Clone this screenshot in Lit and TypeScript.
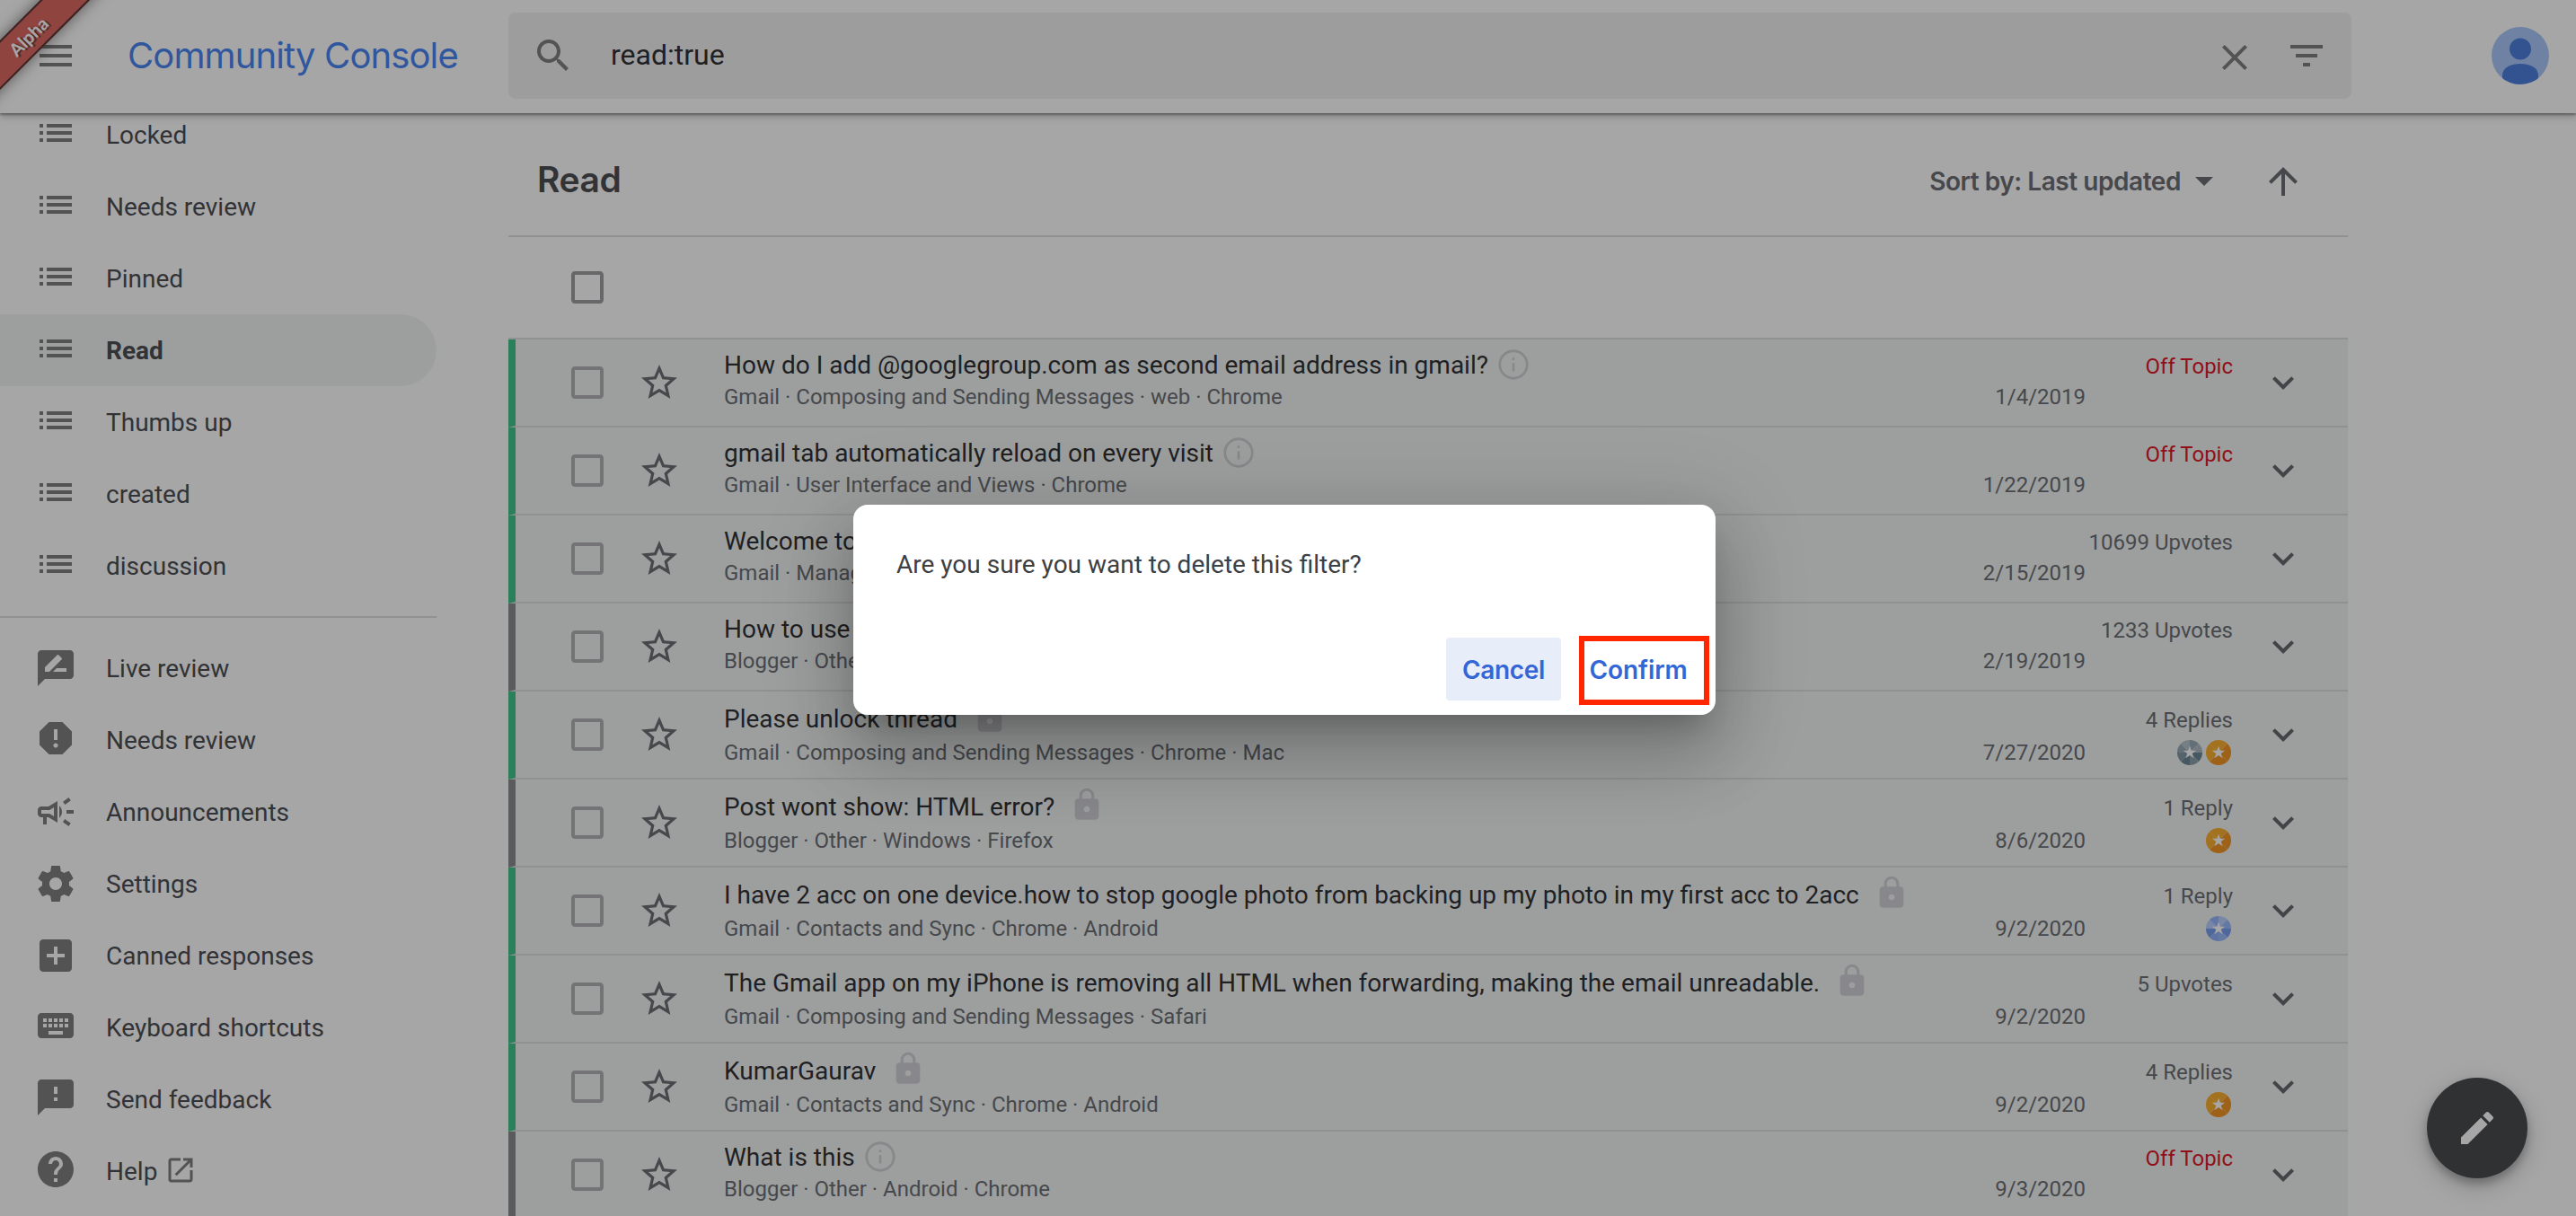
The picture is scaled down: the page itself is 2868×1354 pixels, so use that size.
import { LitElement, html, svg, css, nothing } from "lit";
import { customElement, property } from "lit/decorators.js";
import { classMap } from "lit/directives/class-map.js";

const ICONS: Record<string, string> = {
  menu: "M3 18h18v-2H3v2zm0-5h18v-2H3v2zm0-7v2h18V6H3z",
  search:
    "M15.5 14h-.79l-.28-.27C15.41 12.59 16 11.11 16 9.5 16 5.91 13.09 3 9.5 3S3 5.91 3 9.5 5.91 16 9.5 16c1.61 0 3.09-.59 4.23-1.57l.27.28v.79l5 4.99L20.49 19l-4.99-5zm-6 0C7.01 14 5 11.99 5 9.5S7.01 5 9.5 5 14 7.01 14 9.5 11.99 14 9.5 14z",
  close:
    "M19 6.41L17.59 5 12 10.59 6.41 5 5 6.41 10.59 12 5 17.59 6.41 19 12 13.41 17.59 19 19 17.59 13.41 12z",
  filter: "M10 18h4v-2h-4v2zM3 6v2h18V6H3zm3 7h12v-2H6v2z",
  list: "M3 7h2v2H3zM3 11h2v2H3zM3 15h2v2H3zM7 7h14v2H7zM7 11h14v2H7zM7 15h14v2H7z",
  liveReview:
    "M20 2H4c-1.1 0-1.99.9-1.99 2L2 22l4-4h14c1.1 0 2-.9 2-2V4c0-1.1-.9-2-2-2zM6 14v-2.47l6.88-6.88c.2-.2.51-.2.71 0l1.77 1.77c.2.2.2.51 0 .71L8.47 14H6zm12 0h-7.5l2-2H18v2z",
  report:
    "M15.73 3H8.27L3 8.27v7.46L8.27 21h7.46L21 15.73V8.27L15.73 3zM12 17.3c-.72 0-1.3-.58-1.3-1.3 0-.72.58-1.3 1.3-1.3.72 0 1.3.58 1.3 1.3 0 .72-.58 1.3-1.3 1.3zm1-4.3h-2V7h2v6z",
  campaign:
    "M18 11v2h4v-2h-4zm-2 6.61c.96.71 2.21 1.65 3.2 2.39.4-.53.8-1.07 1.2-1.6-.99-.74-2.24-1.68-3.2-2.4-.4.54-.8 1.08-1.2 1.61zM20.4 5.6c-.4-.53-.8-1.07-1.2-1.6-.99.74-2.24 1.68-3.2 2.4.4.53.8 1.07 1.2 1.6.96-.72 2.21-1.65 3.2-2.4zM4 9c-1.1 0-2 .9-2 2v2c0 1.1.9 2 2 2h1v4h2v-4h1l5 3V6L8 9H4zm5.03 1.71L11 9.53v4.94l-1.97-1.18-.48-.29H4v-2h4.55l.48-.29zM15.5 12c0-1.33-.58-2.53-1.5-3.35v6.69c.92-.81 1.5-2.01 1.5-3.34z",
  settings:
    "M19.43 12.98c.04-.32.07-.64.07-.98s-.03-.66-.07-.98l2.11-1.65c.19-.15.24-.42.12-.64l-2-3.46c-.12-.22-.39-.3-.61-.22l-2.49 1c-.52-.4-1.08-.73-1.69-.98l-.38-2.65C14.46 2.18 14.25 2 14 2h-4c-.25 0-.46.18-.49.42l-.38 2.65c-.61.25-1.17.59-1.69.98l-2.49-1c-.23-.09-.49 0-.61.22l-2 3.46c-.13.22-.07.49.12.64l2.11 1.65c-.04.32-.07.65-.07.98s.03.66.07.98l-2.11 1.65c-.19.15-.24.42-.12.64l2 3.46c.12.22.39.3.61.22l2.49-1c.52.4 1.08.73 1.69.98l.38 2.65c.03.24.24.42.49.42h4c.25 0 .46-.18.49-.42l.38-2.65c.61-.25 1.17-.59 1.69-.98l2.49 1c.23.09.49 0 .61-.22l2-3.46c.12-.22.07-.49-.12-.64l-2.11-1.65zM12 15.5c-1.93 0-3.5-1.57-3.5-3.5s1.57-3.5 3.5-3.5 3.5 1.57 3.5 3.5-1.57 3.5-3.5 3.5z",
  addBox:
    "M19 3H5c-1.11 0-2 .9-2 2v14c0 1.1.89 2 2 2h14c1.1 0 2-.9 2-2V5c0-1.1-.9-2-2-2zm-2 10h-4v4h-2v-4H7v-2h4V7h2v4h4v2z",
  keyboard:
    "M20 5H4c-1.1 0-1.99.9-1.99 2L2 17c0 1.1.9 2 2 2h16c1.1 0 2-.9 2-2V7c0-1.1-.9-2-2-2zm-9 3h2v2h-2V8zm0 3h2v2h-2v-2zM8 8h2v2H8V8zm0 3h2v2H8v-2zm-1 2H5v-2h2v2zm0-3H5V8h2v2zm9 7H8v-2h8v2zm0-4h-2v-2h2v2zm0-3h-2V8h2v2zm3 3h-2v-2h2v2zm0-3h-2V8h2v2z",
  feedback:
    "M20 2H4c-1.1 0-1.99.9-1.99 2L2 22l4-4h14c1.1 0 2-.9 2-2V4c0-1.1-.9-2-2-2zm-7 12h-2v-2h2v2zm0-4h-2V6h2v4z",
  help: "M12 2C6.48 2 2 6.48 2 12s4.48 10 10 10 10-4.48 10-10S17.52 2 12 2zm1 17h-2v-2h2v2zm2.07-7.75l-.9.92C13.45 12.9 13 13.5 13 15h-2v-.5c0-1.1.45-2.1 1.17-2.83l1.24-1.26c.37-.36.59-.86.59-1.41 0-1.1-.9-2-2-2s-2 .9-2 2H8c0-2.21 1.79-4 4-4s4 1.79 4 4c0 .88-.36 1.68-.93 2.25z",
  openInNew:
    "M19 19H5V5h7V3H5c-1.11 0-2 .9-2 2v14c0 1.1.89 2 2 2h14c1.1 0 2-.9 2-2v-7h-2v7zM14 3v2h3.59l-9.83 9.83 1.41 1.41L19 6.41V10h2V3h-7z",
  dropDown: "M7 10l5 5 5-5z",
  arrowUp: "M4 12l1.41 1.41L11 7.83V20h2V7.83l5.58 5.59L20 12l-8-8-8 8z",
  checkbox:
    "M19 5v14H5V5h14m0-2H5c-1.1 0-2 .9-2 2v14c0 1.1.9 2 2 2h14c1.1 0 2-.9 2-2V5c0-1.1-.9-2-2-2z",
  star: "M22 9.24l-7.19-.62L12 2 9.19 8.63 2 9.24l5.46 4.73L5.82 21 12 17.27 18.18 21l-1.63-7.03L22 9.24zM12 15.4l-3.76 2.27 1-4.28-3.32-2.88 4.38-.38L12 6.1l1.71 4.04 4.38.38-3.32 2.88 1 4.28L12 15.4z",
  info: "M11.2 16.5h1.6V11h-1.6v5.5zM12 2C6.48 2 2 6.48 2 12s4.48 10 10 10 10-4.48 10-10S17.52 2 12 2zm0 18.3c-4.58 0-8.3-3.72-8.3-8.3S7.42 3.7 12 3.7s8.3 3.72 8.3 8.3-3.72 8.3-8.3 8.3zM11.2 9h1.6V7.4h-1.6V9z",
  lock: "M18 8h-1V6c0-2.76-2.24-5-5-5S7 3.24 7 6v2H6c-1.1 0-2 .9-2 2v10c0 1.1.9 2 2 2h12c1.1 0 2-.9 2-2V10c0-1.1-.9-2-2-2zm-6 9c-1.1 0-2-.9-2-2s.9-2 2-2 2 .9 2 2-.9 2-2 2zm3.1-9H8.9V6c0-1.71 1.39-3.1 3.1-3.1 1.71 0 3.1 1.39 3.1 3.1v2z",
  expand: "M16.59 8.59L12 13.17 7.41 8.59 6 10l6 6 6-6z",
  edit: "M3 17.25V21h3.75L17.81 9.94l-3.75-3.75L3 17.25zM20.71 7.04c.39-.39.39-1.02 0-1.41l-2.34-2.34c-.39-.39-1.02-.39-1.41 0l-1.83 1.83 3.75 3.75 1.83-1.83z",
};

const icon = (name: string, cls = "") =>
  html`<svg class="icon ${cls}" viewBox="0 0 24 24" aria-hidden="true"><path d=${ICONS[name]}></path></svg>`;

const iconStyles = css`
  .icon {
    display: block;
    flex: none;
    width: 48px;
    height: 48px;
    fill: currentColor;
  }
`;

type Tone = "gold" | "silver" | "blue";

interface Thread {
  title: string;
  meta: string;
  date: string;
  stat: string;
  offTopic?: boolean;
  mark?: "info" | "lock";
  badges?: Tone[];
  accent: "green" | "gray";
  tall?: boolean;
}

const THREADS: Thread[] = [
  { title: "How do I add @googlegroup.com as second email address in gmail?", meta: "Gmail · Composing and Sending Messages · web · Chrome", date: "1/4/2019", stat: "Off Topic", offTopic: true, mark: "info", accent: "green" },
  { title: "gmail tab automatically reload on every visit", meta: "Gmail · User Interface and Views · Chrome", date: "1/22/2019", stat: "Off Topic", offTopic: true, mark: "info", accent: "green" },
  { title: "Welcome to", meta: "Gmail · Manage", date: "2/15/2019", stat: "10699 Upvotes", accent: "green" },
  { title: "How to use", meta: "Blogger · Other", date: "2/19/2019", stat: "1233 Upvotes", accent: "gray" },
  { title: "Please unlock thread", meta: "Gmail · Composing and Sending Messages · Chrome · Mac", date: "7/27/2020", stat: "4 Replies", mark: "lock", badges: ["silver", "gold"], accent: "green", tall: true },
  { title: "Post wont show: HTML error?", meta: "Blogger · Other · Windows · Firefox", date: "8/6/2020", stat: "1 Reply", mark: "lock", badges: ["gold"], accent: "gray", tall: true },
  { title: "I have 2 acc on one device.how to stop google photo from backing up my photo in my first acc to 2acc", meta: "Gmail · Contacts and Sync · Chrome · Android", date: "9/2/2020", stat: "1 Reply", mark: "lock", badges: ["blue"], accent: "green", tall: true },
  { title: "The Gmail app on my iPhone is removing all HTML when forwarding, making the email unreadable.", meta: "Gmail · Composing and Sending Messages · Safari", date: "9/2/2020", stat: "5 Upvotes", mark: "lock", accent: "green", tall: true },
  { title: "KumarGaurav", meta: "Gmail · Contacts and Sync · Chrome · Android", date: "9/2/2020", stat: "4 Replies", mark: "lock", badges: ["gold"], accent: "green", tall: true },
  { title: "What is this", meta: "Blogger · Other · Android · Chrome", date: "9/3/2020", stat: "Off Topic", offTopic: true, mark: "info", accent: "gray" },
];

const FILTERS = ["Locked", "Needs review", "Pinned", "Read", "Thumbs up", "created", "discussion"];

const LINKS: { label: string; icon: string; low?: boolean; external?: boolean }[] = [
  { label: "Live review", icon: "liveReview", low: true },
  { label: "Needs review", icon: "report" },
  { label: "Announcements", icon: "campaign", low: true },
  { label: "Settings", icon: "settings", low: true },
  { label: "Canned responses", icon: "addBox", low: true },
  { label: "Keyboard shortcuts", icon: "keyboard" },
  { label: "Send feedback", icon: "feedback" },
  { label: "Help", icon: "help", external: true },
];

/* Eight wedge colours per badge, clockwise from twelve o'clock. */
const WEDGES: Record<Tone, string[]> = {
  gold: ["#fba81c", "#f18c12", "#f18c12", "#f18c12", "#f18c12", "#fba81c", "#fba81c", "#fba81c"],
  silver: ["#90a4ae", "#a3b4bd", "#607d8b", "#8398a3", "#607d8b", "#78909c", "#90a4ae", "#b0bec5"],
  blue: ["#b4ccff", "#92b2fa", "#6f97ee", "#92b2fa", "#87aaf8", "#7096ec", "#b4ccff", "#8db0fa"],
};

@customElement("medal-badge")
class MedalBadge extends LitElement {
  static styles = css`
    :host { display: block; width: 28px; height: 28px; }
    svg { display: block; width: 28px; height: 28px; }
  `;
  @property() tone: Tone = "gold";

  render() {
    const at = (i: number) => {
      const a = (i * Math.PI) / 4 - Math.PI / 2;
      return `${(14 + 14 * Math.cos(a)).toFixed(2)} ${(14 + 14 * Math.sin(a)).toFixed(2)}`;
    };
    return html`<svg viewBox="0 0 28 28" aria-hidden="true">
      ${WEDGES[this.tone].map((c, i) => svg`<path fill=${c} d="M14 14L${at(i)}A14 14 0 0 1 ${at(i + 1)}z"></path>`)}
      <path fill="#fff" d="M14 6.6l1.75 5.15 5.45.05-4.4 3.2 1.65 5.2L14 17.05 9.55 20.2l1.65-5.2-4.4-3.2 5.45-.05z"></path>
    </svg>`;
  }
}

@customElement("thread-row")
class ThreadRow extends LitElement {
  static styles = [
    iconStyles,
    css`
      :host { display: block; }
      .row {
        box-sizing: border-box;
        display: flex;
        height: 98px;
        border-bottom: 2px solid #dadcdc;
        border-left: 8px solid #30c07e;
        padding: 0 48px 0 56px;
        background: #f0f4f2;
      }
      .gray { border-left-color: #808284; }
      .check, .fav, .more { align-self: center; }
      .check { color: #acacae; margin-right: 32px; }
      .fav { color: #5f6368; margin-right: 48px; }
      .more { color: #5a5c60; margin-left: 32px; }
      .body { flex: 1; min-width: 0; padding-top: 8px; }
      .date, .stats { flex: none; padding-top: 8px; color: #5f6368; font-size: 24px; text-align: right; }
      .stats { width: 164px; }
      .title, .top { display: flex; align-items: center; height: 40px; }
      .title { font-size: 28px; color: #202124; white-space: pre; }
      .meta, .bottom { display: flex; align-items: center; height: 32px; font-size: 24px; color: #5f6368; white-space: pre; }
      .top, .bottom { justify-content: flex-end; }
      .top { box-sizing: border-box; padding-top: 3px; white-space: nowrap; }
      .off { color: #dd0612; }
      .mark { width: 40px; height: 40px; color: #cdcdd0; margin-left: 8px; }
      .lock { margin-left: 16px; margin-top: -4px; color: #cdced2; }
      .tall .body, .tall .date, .tall .stats { padding-top: 10px; }
      .tall .meta, .tall .bottom { margin-top: 2px; }
      .badges { gap: 4px; padding-right: 2px; }
    `,
  ];
  @property({ attribute: false }) thread!: Thread;

  render() {
    const t = this.thread;
    return html`<div class=${classMap({ row: true, gray: t.accent === "gray", tall: !!t.tall })}>
      ${icon("checkbox", "check")} ${icon("star", "fav")}
      <div class="body">
        <div class="title"><span>${t.title}</span>${t.mark ? icon(t.mark, `mark ${t.mark}`) : nothing}</div>
        <div class="meta">${t.meta}</div>
      </div>
      <div class="date"><div class="top"></div><div class="bottom">${t.date}</div></div>
      <div class="stats">
        <div class=${classMap({ top: true, off: !!t.offTopic })}>${t.stat}</div>
        <div class="bottom badges">${(t.badges ?? []).map((b) => html`<medal-badge .tone=${b}></medal-badge>`)}</div>
      </div>
      ${icon("expand", "more")}
    </div>`;
  }
}

@customElement("side-nav")
class SideNav extends LitElement {
  static styles = [
    iconStyles,
    css`
      :host { display: block; width: 486px; color: #3c4043; font-size: 28px; }
      .item { box-sizing: border-box; display: flex; align-items: center; height: 80px; padding-left: 38px; }
      .item .lead { color: #757575; margin: 0 32px 4px 0; }
      .item .low { margin-bottom: 0; }
      .active { background: #f0f4f2; border-radius: 0 40px 40px 0; font-weight: 700; }
      .rule { height: 2px; background: #dadcdc; margin: 16px 0; }
      .item .ext { width: 36px; height: 36px; margin: 0 0 2px 8px; color: #757575; }
    `,
  ];

  render() {
    return html`
      ${FILTERS.map((f) => html`<div class=${classMap({ item: true, active: f === "Read" })}>${icon("list", "lead")}<span>${f}</span></div>`)}
      <div class="rule"></div>
      ${LINKS.map((l) => html`<div class="item">
        ${icon(l.icon, l.low ? "lead low" : "lead")}<span>${l.label}</span>${l.external ? icon("openInNew", "ext") : nothing}
      </div>`)}
    `;
  }
}

@customElement("confirm-dialog")
class ConfirmDialog extends LitElement {
  static styles = css`
    :host {
      box-sizing: border-box;
      display: flex;
      flex-direction: column;
      justify-content: space-between;
      width: 960px;
      height: 234px;
      padding: 49px 16px 16px 48px;
      border-radius: 16px;
      background: #fff;
      box-shadow: 0 22px 30px -14px rgba(0, 0, 0, 0.2), 0 48px 76px 6px rgba(0, 0, 0, 0.14), 0 18px 92px 16px rgba(0, 0, 0, 0.15);
    }
    .message { font-size: 28px; line-height: 36px; color: #3c4043; }
    .actions { display: flex; justify-content: flex-end; gap: 16px; }
    .button {
      position: relative;
      box-sizing: border-box;
      display: flex;
      align-items: center;
      justify-content: center;
      height: 70px;
      width: 128px;
      padding-top: 2px;
      border-radius: 4px;
      font: 600 28px Inter, sans-serif;
      letter-spacing: -0.3px;
      color: #3367d6;
    }
    .focused { background: #e7edf9; }
    .confirm { width: 140px; letter-spacing: -0.1px; }
    .highlight {
      position: absolute;
      box-sizing: border-box;
      left: 4px;
      top: -2px;
      width: 145px;
      height: 77px;
      border: 6px solid #ff2600;
    }
  `;

  render() {
    return html`
      <div class="message">Are you sure you want to delete this filter?</div>
      <div class="actions">
        <div class="button focused">Cancel</div>
        <div class="button confirm">Confirm<span class="highlight"></span></div>
      </div>
    `;
  }
}

@customElement("app-root")
class AppRoot extends LitElement {
  static styles = [
    iconStyles,
    css`
      :host {
        display: block;
        position: relative;
        width: 2868px;
        height: 1354px;
        overflow: hidden;
        background: #fff;
        font-family: Roboto, "Liberation Sans", sans-serif;
        color: #202124;
      }
      .header {
        position: relative;
        z-index: 1;
        box-sizing: border-box;
        display: flex;
        align-items: center;
        height: 126px;
        padding: 14px 30px 16px 38px;
        background: #fff;
        box-shadow: 0 2px 2px rgba(0, 0, 0, 0.32), 0 4px 8px rgba(0, 0, 0, 0.24);
      }
      .header .icon { color: #757575; }
      .brand { width: 424px; margin-left: 56px; padding-bottom: 1px; font: 400 40px Inter, sans-serif; letter-spacing: -0.88px; color: #3b7cf0; }
      .search {
        box-sizing: border-box;
        display: flex;
        align-items: center;
        width: 2052px;
        height: 96px;
        padding: 0 26px;
        border-radius: 8px;
        background: #f0f0f0;
      }
      .query { flex: 1; margin-left: 40px; padding-bottom: 2px; font-size: 32px; }
      .clear { margin: 4px 32px 0 0; }
      .avatar { width: 64px; height: 64px; margin-left: auto; }
      .layout { display: flex; }
      .nav { margin-top: -16px; margin-right: 80px; }
      .main { width: 2048px; }
      .heading {
        box-sizing: border-box;
        display: flex;
        align-items: center;
        height: 138px;
        padding: 16px 48px 0 32px;
        border-bottom: 2px solid #dadcdc;
      }
      .name { flex: 1; padding-bottom: 5px; font: 600 39px Inter, sans-serif; letter-spacing: -0.4px; color: #3c4043; }
      .sort { font: 600 28px Inter, sans-serif; letter-spacing: -0.45px; color: #5f6368; }
      .heading .icon { color: #5f6368; }
      .caret { margin: 0 40px 2px 2px; }
      .toolbar {
        box-sizing: border-box;
        display: flex;
        align-items: center;
        height: 114px;
        padding-left: 64px;
        border-bottom: 2px solid #dadcdc;
      }
      .toolbar .icon { color: #97979a; }
      .ribbon {
        position: absolute;
        z-index: 2;
        left: -64px;
        top: 17px;
        box-sizing: border-box;
        width: 200px;
        height: 39px;
        padding-right: 12px;
        border: solid #4b2523;
        border-width: 2px 0;
        background: #d95c53;
        box-shadow: 0 0 16px rgba(0, 0, 0, 0.55);
        transform: rotate(-45deg);
        font: 700 20px/35px Lato, sans-serif;
        text-align: center;
        color: #fff;
        text-shadow: 2px 2px 0 rgba(0, 0, 0, 0.45);
      }
      .fab {
        position: absolute;
        right: 54px;
        bottom: 42px;
        display: flex;
        align-items: center;
        justify-content: center;
        width: 112px;
        height: 112px;
        border-radius: 50%;
        background: #3b3d3f;
        color: #fff;
        box-shadow: 0 6px 10px rgba(0, 0, 0, 0.25), 0 8px 28px rgba(0, 0, 0, 0.22);
      }
      .scrim {
        position: absolute;
        inset: 0;
        z-index: 3;
        display: flex;
        justify-content: center;
        align-items: flex-start;
        box-sizing: border-box;
        padding: 562px 8px 0 0;
        background: rgba(32, 33, 35, 0.4);
      }
    `,
  ];

  render() {
    return html`
      <header class="header">
        ${icon("menu")}
        <div class="brand">Community Console</div>
        <div class="search">
          ${icon("search")}
          <div class="query">read:true</div>
          ${icon("close", "clear")} ${icon("filter")}
        </div>
        <svg class="avatar" viewBox="0 0 64 64" aria-hidden="true">
          <clipPath id="round"><circle cx="32" cy="32" r="32"></circle></clipPath>
          <g clip-path="url(#round)">
            <rect width="64" height="64" fill="#a3c4f9"></rect>
            <circle cx="32" cy="24.5" r="12" fill="#4075d9"></circle>
            <path fill="#4075d9" d="M12 64V54c0-8 8-13 20-13s20 5 20 13v10z"></path>
          </g>
        </svg>
      </header>
      <div class="ribbon">Alpha</div>
      <div class="layout">
        <side-nav class="nav"></side-nav>
        <main class="main">
          <div class="heading">
            <div class="name">Read</div>
            <div class="sort">Sort by: Last updated</div>
            ${icon("dropDown", "caret")} ${icon("arrowUp")}
          </div>
          <div class="toolbar">${icon("checkbox")}</div>
          ${THREADS.map((t) => html`<thread-row .thread=${t}></thread-row>`)}
        </main>
      </div>
      <div class="fab">${icon("edit")}</div>
      <div class="scrim"><confirm-dialog></confirm-dialog></div>
    `;
  }
}
